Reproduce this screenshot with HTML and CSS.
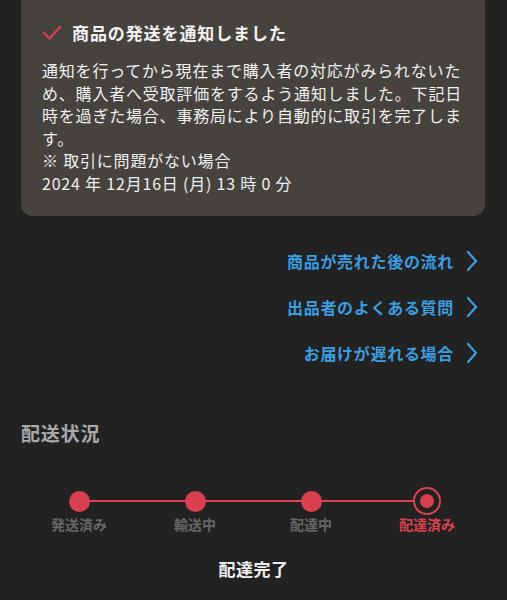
FILE: index.html
```html
<!DOCTYPE html>
<html lang="ja">
<head>
  <meta charset="UTF-8" />
  <meta name="viewport" content="width=device-width, initial-scale=1.0" />
  <title>取引画面</title>
  <link rel="stylesheet" href="styles.css">
</head>
<body>
  <div class="notice">
    <h2 class="notice-title">
      <svg class="check" viewBox="0 0 20 16">
        <path d="M2,8 L7.5,13.5 L18,2" />
      </svg>
      商品の発送を通知しました
    </h2>
    <p class="notice-text">通知を行ってから現在まで購入者の対応がみられないため、購入者へ受取評価をするよう通知しました。下記日時を過ぎた場合、事務局により自動的に取引を完了します。<br>※ 取引に問題がない場合<br>2024 年 12月16日 (月) 13 時 0 分</p>
  </div>

  <ul class="links">
    <li><a href="#">商品が売れた後の流れ<svg class="chev" viewBox="0 0 12 22"><path d="M2,2 L10,11 L2,20" /></svg></a></li>
    <li><a href="#">出品者のよくある質問<svg class="chev" viewBox="0 0 12 22"><path d="M2,2 L10,11 L2,20" /></svg></a></li>
    <li><a href="#">お届けが遅れる場合<svg class="chev" viewBox="0 0 12 22"><path d="M2,2 L10,11 L2,20" /></svg></a></li>
  </ul>

  <h3 class="section-title">配送状況</h3>

  <div class="steps">
    <div class="steps-line"></div>
    <div class="step">
      <span class="dot"></span>
      <span class="label">発送済み</span>
    </div>
    <div class="step">
      <span class="dot"></span>
      <span class="label">輸送中</span>
    </div>
    <div class="step">
      <span class="dot"></span>
      <span class="label">配達中</span>
    </div>
    <div class="step current">
      <span class="dot"></span>
      <span class="label">配達済み</span>
    </div>
  </div>

  <p class="status">配達完了</p>
</body>
</html>
```

FILE: styles.css
```css
* {
  margin: 0;
  padding: 0;
  box-sizing: border-box;
}
body {
  background: #222222;
  font-family: "Noto Sans CJK JP", "Noto Sans", sans-serif;
  color: #eeeeee;
  width: 507px;
  height: 600px;
  overflow: hidden;
}
.notice {
  margin: -10px 22px 0 21px;
  padding: 32px 20px 22px 21px;
  background: #46433e;
  border-radius: 12px;
}
.notice-title {
  display: flex;
  align-items: center;
  gap: 10px;
  font-size: 17px;
  line-height: 22px;
  font-weight: 700;
  letter-spacing: 0.9px;
  color: #f2f2f2;
}
.check {
  width: 20px;
  height: 16px;
  fill: none;
  stroke: #d9404f;
  stroke-width: 2.4;
  stroke-linecap: round;
  stroke-linejoin: round;
}
.notice-text {
  margin-top: 15px;
  font-size: 16px;
  line-height: 22.5px;
  letter-spacing: 0.8px;
  color: #f0f0f0;
}
.links {
  list-style: none;
  margin-top: 33px;
  padding-right: 29px;
  display: flex;
  flex-direction: column;
  align-items: flex-end;
  gap: 22px;
}
.links a {
  display: flex;
  align-items: center;
  gap: 12px;
  font-size: 16px;
  line-height: 24px;
  font-weight: 700;
  letter-spacing: 0.7px;
  color: #3a9ee0;
  text-decoration: none;
}
.chev {
  width: 12px;
  height: 22px;
  fill: none;
  stroke: #3a9ee0;
  stroke-width: 2.2;
  stroke-linecap: round;
  stroke-linejoin: round;
}
.section-title {
  margin: 55px 0 0 21px;
  font-size: 19px;
  line-height: 26px;
  font-weight: 700;
  letter-spacing: 0.8px;
  color: #a9a9a9;
}
.steps {
  position: relative;
  margin: 41px 22px 0 21px;
  display: grid;
  grid-template-columns: repeat(4, 1fr);
}
.steps-line {
  position: absolute;
  top: 13px;
  left: 58px;
  right: 58px;
  height: 2px;
  background: #d9404f;
}
.step {
  display: flex;
  flex-direction: column;
  align-items: center;
  position: relative;
}
.dot {
  width: 28px;
  height: 28px;
  display: flex;
  justify-content: center;
  align-items: center;
}
.dot::after {
  content: "";
  width: 21px;
  height: 21px;
  border-radius: 50%;
  background: #d9404f;
}
.current .dot {
  border: 2.5px solid #d9404f;
  border-radius: 50%;
  background: #222222;
}
.current .dot::after {
  width: 14px;
  height: 14px;
}
.label {
  margin-top: 0;
  font-size: 14px;
  line-height: 18px;
  font-weight: 700;
  color: #666666;
}
.current .label {
  color: #d9404f;
}
.status {
  margin-top: 24px;
  text-align: center;
  font-size: 17px;
  line-height: 24px;
  font-weight: 700;
  letter-spacing: 0.5px;
  color: #f0f0f0;
}
```
